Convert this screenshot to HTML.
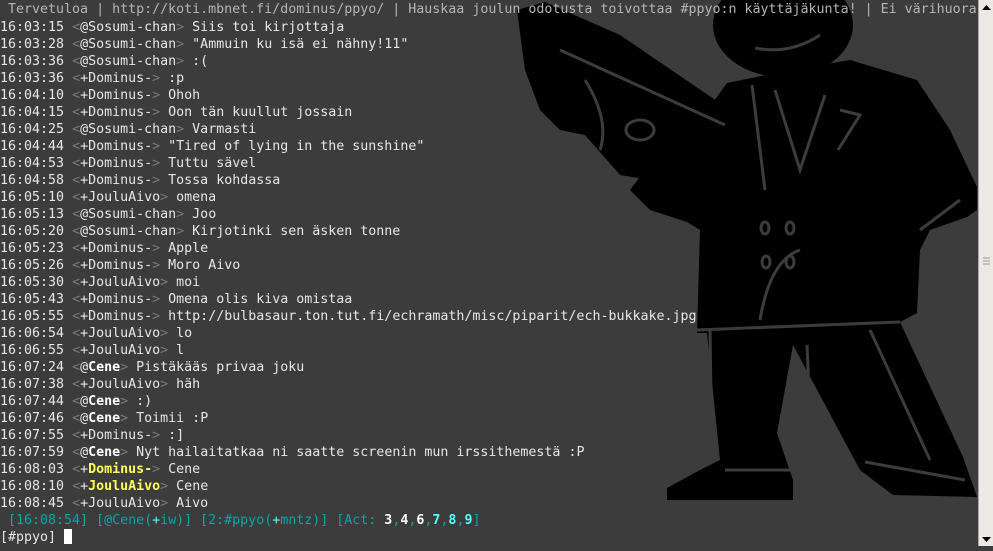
<!DOCTYPE html>
<html><head><meta charset="utf-8"><style>
html,body{margin:0;padding:0;width:993px;height:546px;overflow:hidden;background:#3c3c3c}
#t{position:absolute;left:0;top:1px;width:978px;font-family:"DejaVu Sans Mono","Liberation Mono",monospace;font-size:13.3px;line-height:17px;color:#e6e6e6;white-space:pre;overflow:hidden}
#t .m{display:block;height:1px}
.d{color:#7a7a7a}.b{font-weight:bold;color:#fff}.y{font-weight:bold;color:#ffff55}
.tp{color:#b4b4b4}.c{color:#00a8a8}.cb{color:#55ffff;font-weight:bold}.w{color:#fff;font-weight:bold}
#sb{position:absolute;left:978px;top:0;width:15px;height:546px;background:#ebe9e3;border-left:1px solid #aaa}
.cur{display:inline-block;width:8px;height:15px;background:#fff;vertical-align:-3px}
</style></head><body>
<svg width="993" height="546" style="position:absolute;left:0;top:0">
<g fill="#000">
<ellipse cx="783" cy="25" rx="70" ry="52"/>
<polygon points="727,83 790,70 850,60 917,80 950,130 977,187 977,210 967,217 930,230 920,250 917,313 900,322 963,457 977,497 893,495 860,470 793,345 777,433 793,480 793,500 667,500 667,488 700,470 720,460 707,333 697,333 700,230 687,222 650,210 630,190 660,150 700,120"/>
<polygon points="517,10 545,2 620,35 730,110 725,140 690,170 650,180 620,175 585,135 560,130 540,110 525,70"/>
</g>
<g fill="none" stroke="#3c3c3c" stroke-width="3">
<path d="M755 48 Q790 55 820 35 M752 85 L765 190 M775 90 L800 170 L825 95 M840 110 L860 115 L838 150 M920 230 L960 200 M800 250 Q770 260 760 320 M697 330 L900 322 M807 345 L812 460 M870 330 L930 460 M725 470 L790 470 M865 462 L965 480 M560 50 L725 125 M585 80 Q610 120 600 150 M710 330 L712 460"/>
<ellipse cx="765" cy="228" rx="4" ry="6"/><ellipse cx="790" cy="228" rx="4" ry="6"/><ellipse cx="766" cy="262" rx="4" ry="6"/><ellipse cx="790" cy="262" rx="4" ry="6"/>
<ellipse cx="640" cy="130" rx="14" ry="10"/>
</g>
</svg>
<div id="t"><span class="tp"> Tervetuloa | http://koti.mbnet.fi/dominus/ppyo/ | Hauskaa joulun odotusta toivottaa #ppyo:n käyttäjäkunta! | Ei värihuora</span><span class="m"></span>16:03:15 <span class="d">&lt;</span>@Sosumi-chan<span class="d">&gt;</span> Siis toi kirjottaja
16:03:28 <span class="d">&lt;</span>@Sosumi-chan<span class="d">&gt;</span> "Ammuin ku isä ei nähny!11"
16:03:36 <span class="d">&lt;</span>@Sosumi-chan<span class="d">&gt;</span> :(
16:03:36 <span class="d">&lt;</span>+Dominus-<span class="d">&gt;</span> :p
16:04:10 <span class="d">&lt;</span>+Dominus-<span class="d">&gt;</span> Ohoh
16:04:15 <span class="d">&lt;</span>+Dominus-<span class="d">&gt;</span> Oon tän kuullut jossain
16:04:25 <span class="d">&lt;</span>@Sosumi-chan<span class="d">&gt;</span> Varmasti
16:04:44 <span class="d">&lt;</span>+Dominus-<span class="d">&gt;</span> "Tired of lying in the sunshine"
16:04:53 <span class="d">&lt;</span>+Dominus-<span class="d">&gt;</span> Tuttu sävel
16:04:58 <span class="d">&lt;</span>+Dominus-<span class="d">&gt;</span> Tossa kohdassa
16:05:10 <span class="d">&lt;</span>+JouluAivo<span class="d">&gt;</span> omena
16:05:13 <span class="d">&lt;</span>@Sosumi-chan<span class="d">&gt;</span> Joo
16:05:20 <span class="d">&lt;</span>@Sosumi-chan<span class="d">&gt;</span> Kirjotinki sen äsken tonne
16:05:23 <span class="d">&lt;</span>+Dominus-<span class="d">&gt;</span> Apple
16:05:26 <span class="d">&lt;</span>+Dominus-<span class="d">&gt;</span> Moro Aivo
16:05:30 <span class="d">&lt;</span>+JouluAivo<span class="d">&gt;</span> moi
16:05:43 <span class="d">&lt;</span>+Dominus-<span class="d">&gt;</span> Omena olis kiva omistaa
16:05:55 <span class="d">&lt;</span>+Dominus-<span class="d">&gt;</span> http://bulbasaur.ton.tut.fi/echramath/misc/piparit/ech-bukkake.jpg
16:06:54 <span class="d">&lt;</span>+JouluAivo<span class="d">&gt;</span> lo
16:06:55 <span class="d">&lt;</span>+JouluAivo<span class="d">&gt;</span> l
16:07:24 <span class="d">&lt;</span>@<span class="b">Cene</span><span class="d">&gt;</span> Pistäkääs privaa joku
16:07:38 <span class="d">&lt;</span>+JouluAivo<span class="d">&gt;</span> häh
16:07:44 <span class="d">&lt;</span>@<span class="b">Cene</span><span class="d">&gt;</span> :)
16:07:46 <span class="d">&lt;</span>@<span class="b">Cene</span><span class="d">&gt;</span> Toimii :P
16:07:55 <span class="d">&lt;</span>+Dominus-<span class="d">&gt;</span> :]
16:07:59 <span class="d">&lt;</span>@<span class="b">Cene</span><span class="d">&gt;</span> Nyt hailaitatkaa ni saatte screenin mun irssithemestä :P
16:08:03 <span class="d">&lt;</span>+<span class="y">Dominus-</span><span class="d">&gt;</span> Cene
16:08:10 <span class="d">&lt;</span>+<span class="y">JouluAivo</span><span class="d">&gt;</span> Cene
16:08:45 <span class="d">&lt;</span>+JouluAivo<span class="d">&gt;</span> Aivo
<span class="c"> [16:08:54] [@Cene(<span class="cb" style="font-weight:normal">+</span>iw)] [2:#ppyo(<span class="cb" style="font-weight:normal">+</span>mntz)] [Act: <span class="w">3</span>,<span class="w">4</span>,<span class="w">6</span>,<span class="cb">7</span>,<span class="cb">8</span>,<span class="cb">9</span>]</span>
[#ppyo] <span class="cur"></span></div>
<div id="sb">
<svg width="15" height="546"><path d="M3 10 L7.5 5 L12 10Z" fill="#000"/><path d="M3 537 L7.5 542 L12 537Z" fill="#000"/><path d="M4 258h7M4 261h7M4 264h7" stroke="#999"/></svg>
</div>
</body></html>
